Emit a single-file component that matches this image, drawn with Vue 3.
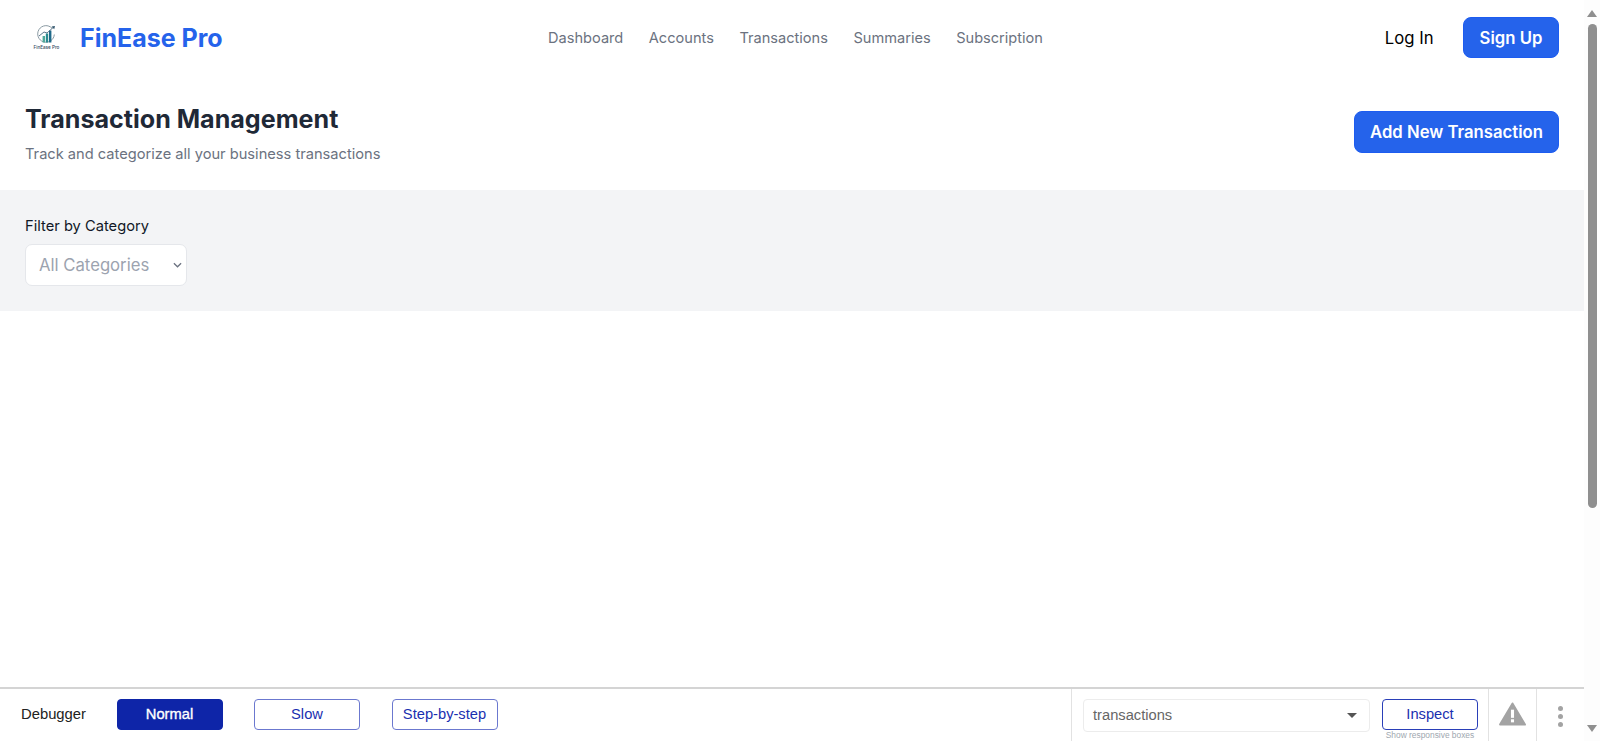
<template>
  <div class="window">
    <div class="page">
      <div class="main">
        <header class="navbar">
          <div class="brand">
            <svg class="logo" viewBox="0 0 30 26" width="30" height="26">
              <path d="M20 3.2 A8.3 8.3 0 1 0 22.3 9.5" fill="none" stroke="#8a9aa3" stroke-width="1" />
              <rect x="10.6" y="11" width="2.4" height="6.5" fill="#4fa99a" />
              <rect x="13.8" y="8.5" width="2.4" height="9" fill="#2a8a8f" />
              <rect x="17" y="5.5" width="2.4" height="12" fill="#1f6a8a" />
              <path d="M7 11 L12 7 L15 8 L21.5 2.2" fill="none" stroke="#33566e" stroke-width="0.8" />
              <path d="M19.6 1.6 L23 1 L22.2 4.2 Z" fill="#33566e" />
              <text x="14.5" y="24" text-anchor="middle" class="logo-text">FinEase Pro</text>
            </svg>
            <span class="brand-name">FinEase Pro</span>
          </div>
          <nav class="nav-links">
            <a v-for="link in links" :key="link">{{ link }}</a>
          </nav>
          <div class="auth">
            <span class="login">Log In</span>
            <button class="btn-primary signup">Sign Up</button>
          </div>
        </header>

        <section class="title-row">
          <div>
            <h1>Transaction Management</h1>
            <p>Track and categorize all your business transactions</p>
          </div>
          <button class="btn-primary add">Add New Transaction</button>
        </section>

        <section class="filters">
          <label>Filter by Category</label>
          <div class="select">
            <span>All Categories</span>
            <svg viewBox="0 0 10 6" width="9" height="6">
              <path d="M1 1 L5 5 L9 1" fill="none" stroke="#6b7280" stroke-width="1.4" />
            </svg>
          </div>
        </section>
      </div>

      <footer class="debugger">
        <span class="debug-label">Debugger</span>
        <button class="debug-btn active">Normal</button>
        <button class="debug-btn">Slow</button>
        <button class="debug-btn">Step-by-step</button>
        <div class="inspector">
          <div class="route-select">
            <span>transactions</span>
            <i class="caret"></i>
          </div>
          <div class="inspect-wrap">
            <button class="debug-btn inspect">Inspect</button>
            <small>Show responsive boxes</small>
          </div>
        </div>
        <div class="warn-cell">
          <svg viewBox="0 0 28 25" width="27" height="24">
            <path d="M14 1.5 L27 23.5 H1 Z" fill="#a3a3a3" stroke="#a3a3a3" stroke-width="2" stroke-linejoin="round" />
            <rect x="12.4" y="8" width="3.2" height="8.5" fill="#fff" />
            <rect x="12.4" y="18" width="3.2" height="3.2" fill="#fff" />
          </svg>
        </div>
        <div class="menu-cell">
          <i></i><i></i><i></i>
        </div>
      </footer>
    </div>

    <div class="scrollbar">
      <i class="arrow up"></i>
      <div class="thumb"></div>
      <i class="arrow down"></i>
    </div>
  </div>
</template>

<script setup>
const links = ["Dashboard", "Accounts", "Transactions", "Summaries", "Subscription"];
</script>

<style>
html,
body {
  margin: 0;
  background: #fff;
}
</style>

<style scoped>
.window {
  display: flex;
  height: 741px;
  overflow: hidden;
  font-family: Inter, "Liberation Sans", sans-serif;
  color: #111827;
}

.page {
  flex: 1;
  min-width: 0;
  display: flex;
  flex-direction: column;
}

.main {
  flex: 1;
}

.navbar {
  display: grid;
  grid-template-columns: 1fr auto 1fr;
  align-items: center;
  height: 75px;
  padding: 0 25px 0 32px;
}

.brand {
  display: flex;
  align-items: center;
  gap: 18px;
}

.logo-text {
  font-size: 4.6px;
  font-weight: 500;
  fill: #33475b;
}

.brand-name {
  font-size: 25px;
  font-weight: 700;
  color: #2563eb;
}

.nav-links {
  display: flex;
  gap: 25.5px;
  font-size: 14.6px;
  color: #6b7280;
}

.auth {
  display: flex;
  justify-content: flex-end;
  align-items: center;
  gap: 29.5px;
}

.login {
  font-size: 16.7px;
  font-weight: 400;
  color: #000;
}

.btn-primary {
  background: #2563eb;
  color: #fff;
  border: 1px solid #1d5cf0;
  border-radius: 8px;
  font-family: inherit;
  font-size: 16.7px;
  font-weight: 600;
}

.signup {
  width: 96px;
  height: 41px;
}

.title-row {
  display: flex;
  justify-content: space-between;
  align-items: flex-start;
  height: 115px;
  padding: 0 25px;
}

h1 {
  margin: 28px 0 0;
  font-size: 25.1px;
  line-height: 32px;
  font-weight: 700;
  color: #1f2937;
}

p {
  margin: 9px 0 0;
  font-size: 14.65px;
  line-height: 20px;
  color: #6b7280;
}

.add {
  width: 205px;
  height: 42px;
  margin-top: 36px;
}

.filters {
  height: 121px;
  box-sizing: border-box;
  padding: 26.5px 25px 0;
  background: #f3f4f6;
}

label {
  display: block;
  font-size: 14.7px;
  line-height: 18px;
  font-weight: 400;
  color: #111827;
}

.select {
  display: flex;
  justify-content: space-between;
  align-items: center;
  box-sizing: border-box;
  width: 162px;
  height: 41.5px;
  margin-top: 9.5px;
  padding: 0 4px 0 13px;
  background: #fff;
  border: 1px solid #e5e7eb;
  border-radius: 7px;
  font-size: 16.7px;
  color: #9ca3af;
}

.debugger {
  display: flex;
  align-items: flex-start;
  box-sizing: border-box;
  height: 54px;
  border-top: 2px solid #d4d4d4;
  font-family: "Liberation Sans", Arial, sans-serif;
  font-size: 14.7px;
}

.debug-label {
  width: 116.5px;
  padding: 17px 0 0 21px;
  box-sizing: border-box;
  font-size: 14.8px;
  color: #222;
}

.debug-btn {
  width: 106px;
  height: 31px;
  margin: 10px 31.5px 0 0;
  padding: 0 0 2px;
  background: #fff;
  border: 1px solid #6b78cf;
  border-radius: 4px;
  font-family: inherit;
  font-size: 14.7px;
  color: #1a2fb0;
}

.debug-btn.active {
  background: #0e25a8;
  border-color: #0e25a8;
  color: #fff;
  -webkit-text-stroke: 0.35px #fff;
}

.inspector {
  display: flex;
  gap: 12px;
  align-self: stretch;
  box-sizing: border-box;
  width: 417px;
  margin-left: auto;
  padding: 10px 10px 0 11px;
  border-left: 1px solid #e2e2e2;
}

.route-select {
  display: flex;
  justify-content: space-between;
  align-items: center;
  box-sizing: border-box;
  flex: 1;
  height: 33px;
  padding: 0 12px 1px 9px;
  border: 1px solid #ececec;
  border-radius: 4px;
  color: #666;
}

.caret {
  width: 0;
  height: 0;
  border-left: 5px solid transparent;
  border-right: 5px solid transparent;
  border-top: 5px solid #555;
}

.inspect-wrap {
  display: flex;
  flex-direction: column;
  align-items: center;
}

.inspect {
  width: 96px;
  margin: 0;
  border-color: #2a3fb8;
}

small {
  margin-top: 1px;
  font-size: 8.4px;
  line-height: 9px;
  white-space: nowrap;
  color: #a0a8b0;
}

.warn-cell {
  display: flex;
  justify-content: center;
  align-self: stretch;
  box-sizing: border-box;
  width: 48px;
  padding-top: 13px;
  border-left: 1px solid #e2e2e2;
}

.menu-cell {
  display: flex;
  flex-direction: column;
  align-items: center;
  gap: 3px;
  align-self: stretch;
  box-sizing: border-box;
  width: 48px;
  padding-top: 17px;
  border-left: 1px solid #e2e2e2;
}

.menu-cell i {
  width: 5px;
  height: 5px;
  border-radius: 50%;
  background: #a3a3a3;
}

.scrollbar {
  display: flex;
  flex-direction: column;
  align-items: center;
  justify-content: space-between;
  width: 16px;
  padding: 10px 0 9px;
  box-sizing: border-box;
  background: #fdfdfd;
}

.thumb {
  width: 9px;
  height: 484px;
  margin: 7px 0 auto;
  border-radius: 5px;
  background: #8f8f8f;
}

.arrow {
  width: 0;
  height: 0;
  border-left: 5px solid transparent;
  border-right: 5px solid transparent;
}

.arrow.up {
  border-bottom: 7px solid #8f8f8f;
}

.arrow.down {
  border-top: 7px solid #8f8f8f;
}
</style>
